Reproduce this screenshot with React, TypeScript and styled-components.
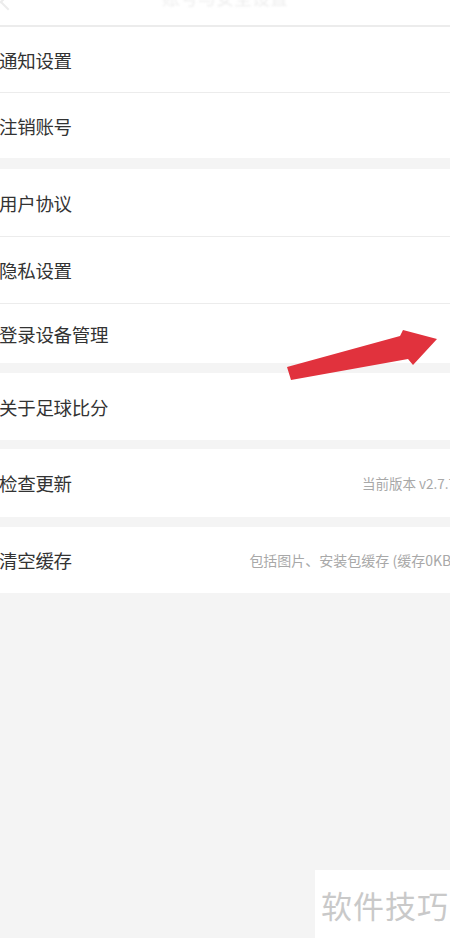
import React from "react";
import styled, { createGlobalStyle } from "styled-components";

const GlobalStyle = createGlobalStyle`
  html, body {
    margin: 0;
    padding: 0;
    background: #f4f4f4;
  }
  body {
    font-family: "Noto Sans CJK SC", "Noto Sans", sans-serif;
    overflow: hidden;
  }
`;

const Screen = styled.div`
  position: relative;
  width: 450px;
  height: 938px;
  overflow: hidden;
  background: #f4f4f4;
`;

const Header = styled.div`
  height: 25px;
  background: #fff;
  border-bottom: 2px solid #ececec;
  display: flex;
  align-items: flex-end;
  justify-content: center;
  overflow: hidden;
`;

const Title = styled.div`
  font-size: 18px;
  line-height: 18px;
  color: #eeeeee;
  margin-bottom: 19px;
  filter: blur(1.2px);
`;

const BackMark = styled.div`
  position: absolute;
  left: 2px;
  top: -4px;
  width: 10px;
  height: 10px;
  border-left: 2px solid #ececec;
  border-bottom: 2px solid #ececec;
  transform: rotate(45deg);
`;

const List = styled.div`
  display: flex;
  flex-direction: column;
  margin-right: -40px;
`;

const Group = styled.div<{ $gap?: number }>`
  background: #fff;
  margin-bottom: ${(p) => p.$gap ?? 10}px;
  display: flex;
  flex-direction: column;
`;

const Row = styled.div<{ $h?: number }>`
  height: ${(p) => p.$h ?? 66}px;
  display: flex;
  align-items: center;
  padding-right: 34px;
  & + & {
    border-top: 1px solid #ececec;
  }
`;

const Label = styled.span`
  margin-left: -1px;
  font-size: 18.5px;
  color: #333;
  letter-spacing: -0.3px;
`;

const Value = styled.span<{ $size?: number }>`
  margin-left: auto;
  font-size: ${(p) => p.$size ?? 13.5}px;
  color: #a8a8a8;
  white-space: nowrap;
`;

const Arrow = styled.svg`
  position: absolute;
  left: 280px;
  top: 322px;
`;

const Watermark = styled.div`
  position: absolute;
  right: 0;
  bottom: 0;
  width: 135px;
  height: 68px;
  background: #fff;
  display: flex;
  align-items: center;
  padding-left: 6px;
  box-sizing: border-box;
  font-size: 31px;
  color: #c9c9c9;
  letter-spacing: 1px;
`;

const App: React.FC = () => {
  return (
    <Screen>
      <GlobalStyle />
      <Header>
        <BackMark />
        <Title>账号与安全设置</Title>
      </Header>
      <List>
        <Group $gap={11}>
          <Row $h={65}>
            <Label>通知设置</Label>
          </Row>
          <Row $h={65}>
            <Label>注销账号</Label>
          </Row>
        </Group>
        <Group>
          <Row $h={67}>
            <Label>用户协议</Label>
          </Row>
          <Row $h={66}>
            <Label>隐私设置</Label>
          </Row>
          <Row $h={59}>
            <Label>登录设备管理</Label>
          </Row>
        </Group>
        <Group $gap={9}>
          <Row $h={67}>
            <Label>关于足球比分</Label>
          </Row>
        </Group>
        <Group>
          <Row $h={68}>
            <Label>检查更新</Label>
            <Value>当前版本 v2.7.7</Value>
          </Row>
        </Group>
        <Group>
          <Row $h={66}>
            <Label>清空缓存</Label>
            <Value $size={14}>包括图片、安装包缓存 (缓存0KB)</Value>
          </Row>
        </Group>
      </List>
      <Arrow width="170" height="70" viewBox="0 0 170 70">
        <polygon
          points="7,45 120,14 123,8 157,17 133,43 128,37 11,58"
          fill="#e1323d"
        />
      </Arrow>
      <Watermark>软件技巧</Watermark>
    </Screen>
  );
};

export default App;
